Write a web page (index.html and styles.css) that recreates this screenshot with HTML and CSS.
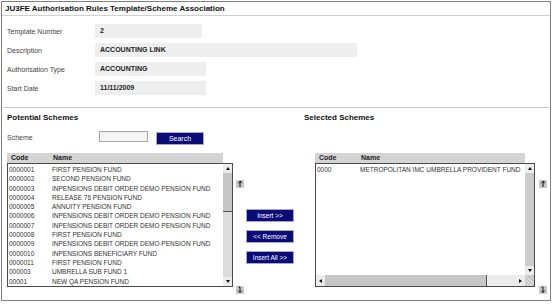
FILE: index.html
```html
<!DOCTYPE html>
<html lang="en">

<head>
    <meta charset="UTF-8">
    <title>Authorisation Rules Template/Scheme Association</title>
    <link rel="stylesheet" href="styles.css">
</head>

<body>
    <div class="frame">
        <div class="title">JU3FE Authorisation Rules Template/Scheme Association</div>

        <div class="details">
            <div class="field"><span class="label">Template Number</span><span class="value w-short">2</span></div>
            <div class="field"><span class="label">Description</span><span class="value w-long">ACCOUNTING LINK</span></div>
            <div class="field"><span class="label">Authorisation Type</span><span class="value w-mid">ACCOUNTING</span></div>
            <div class="field"><span class="label">Start Date</span><span class="value w-mid">11/11/2009</span></div>
        </div>

        <div class="divider"></div>

        <div class="heads">
            <div class="head head-left">Potential Schemes</div>
            <div class="head">Selected Schemes</div>
        </div>

        <div class="search-row">
            <span class="label search-label">Scheme</span>
            <input type="text" class="search-input">
            <button class="btn btn-search">Search</button>
        </div>

        <div class="lists">
            <div class="list-group list-left">
                <div class="list-head"><span class="col-code">Code</span><span>Name</span></div>
                <div class="listbox">
                    <div class="rows">
                        <div class="row"><span class="code">0000001</span><span>FIRST PENSION FUND</span></div>
                        <div class="row"><span class="code">0000002</span><span>SECOND PENSION FUND</span></div>
                        <div class="row"><span class="code">0000003</span><span>INPENSIONS DEBIT ORDER DEMO PENSION FUND</span></div>
                        <div class="row"><span class="code">0000004</span><span>RELEASE 76 PENSION FUND</span></div>
                        <div class="row"><span class="code">0000005</span><span>ANNUITY PENSION FUND</span></div>
                        <div class="row"><span class="code">0000006</span><span>INPENSIONS DEBIT ORDER DEMO PENSION FUND</span></div>
                        <div class="row"><span class="code">0000007</span><span>INPENSIONS DEBIT ORDER DEMO PENSION FUND</span></div>
                        <div class="row"><span class="code">0000008</span><span>FIRST PENSION FUND</span></div>
                        <div class="row"><span class="code">0000009</span><span>INPENSIONS DEBIT ORDER DEMO PENSION FUND</span></div>
                        <div class="row"><span class="code">0000010</span><span>INPENSIONS BENEFICIARY FUND</span></div>
                        <div class="row"><span class="code">0000011</span><span>FIRST PENSION FUND</span></div>
                        <div class="row"><span class="code">000003</span><span>UMBRELLA SUB FUND 1</span></div>
                        <div class="row"><span class="code">00001</span><span>NEW QA PENSION FUND</span></div>
                    </div>
                    <div class="vscroll">
                        <div class="arrow arrow-up"></div>
                        <div class="thumb"></div>
                        <div class="track"></div>
                        <div class="arrow arrow-down"></div>
                    </div>
                </div>
            </div>

            <div class="movers">
                <div class="mover">
                    <svg width="8" height="8" viewBox="0 0 8 8"><path d="M4 7V1.5M2.3 3.3L4 1.5L5.7 3.3M4 1.5H5.5" fill="none" stroke="#111" stroke-width="1"/></svg>
                </div>
                <div class="mover">
                    <svg width="8" height="8" viewBox="0 0 8 8"><path d="M4 1V6.5M2.3 4.7L4 6.5L5.7 4.7M2.5 1H4" fill="none" stroke="#111" stroke-width="1"/></svg>
                </div>
            </div>

            <div class="actions">
                <button class="btn">Insert &gt;&gt;</button>
                <button class="btn">&lt;&lt; Remove</button>
                <button class="btn">Insert All &gt;&gt;</button>
            </div>

            <div class="list-group list-right">
                <div class="list-head"><span class="col-code">Code</span><span>Name</span></div>
                <div class="listbox listbox-grid">
                    <div class="rows">
                        <div class="row"><span class="code">0000</span><span>METROPOLITAN IMC UMBRELLA PROVIDENT FUND</span></div>
                    </div>
                    <div class="vscroll">
                        <div class="arrow arrow-up"></div>
                        <div class="track track-off"></div>
                        <div class="arrow arrow-down"></div>
                    </div>
                    <div class="hscroll">
                        <div class="arrow arrow-left"></div>
                        <div class="hthumb"></div>
                        <div class="track"></div>
                        <div class="arrow arrow-right"></div>
                    </div>
                    <div class="corner"></div>
                </div>
            </div>

            <div class="movers movers-right">
                <div class="mover">
                    <svg width="8" height="8" viewBox="0 0 8 8"><path d="M4 7V1.5M2.3 3.3L4 1.5L5.7 3.3M4 1.5H5.5" fill="none" stroke="#111" stroke-width="1"/></svg>
                </div>
                <div class="mover">
                    <svg width="8" height="8" viewBox="0 0 8 8"><path d="M4 1V6.5M2.3 4.7L4 6.5L5.7 4.7M2.5 1H4" fill="none" stroke="#111" stroke-width="1"/></svg>
                </div>
            </div>
        </div>
    </div>
</body>

</html>
```

FILE: styles.css
```css
body {
    margin: 0;
    background-color: #ffffff;
    color: #222222;
    font-family: 'Liberation Sans', Arial, sans-serif;
}

.frame {
    margin: 1px 0 0 1px;
    width: 548px;
    height: 298px;
    border: 1px solid #808080;
}

.title {
    height: 13px;
    line-height: 13px;
    padding-left: 3px;
    font-size: 8px;
    font-weight: bold;
    color: #111111;
    border-bottom: 1px solid #d0d0d0;
}

/* template details */
.details {
    display: flex;
    flex-direction: column;
    gap: 5px;
    padding: 8px 0 0 5px;
}

.field {
    display: flex;
    align-items: center;
    height: 14px;
}

.label {
    width: 88px;
    font-size: 7px;
    color: #444444;
}

.value {
    height: 14px;
    line-height: 14px;
    padding-left: 5px;
    box-sizing: border-box;
    background-color: #eeeeee;
    font-size: 7px;
    font-weight: bold;
    color: #222222;
}

.w-short {
    width: 107px;
}

.w-mid {
    width: 111px;
}

.w-long {
    width: 262px;
}

.divider {
    margin: 12px 1px 0 2px;
    border-top: 1px solid #c4c4c4;
}

/* schemes */
.heads {
    display: flex;
    padding: 5px 0 0 5px;
}

.head {
    line-height: 10px;
    font-size: 8px;
    font-weight: bold;
    color: #111111;
}

.head-left {
    width: 297px;
}

.search-row {
    display: flex;
    align-items: flex-start;
    height: 14px;
    margin-top: 8px;
    padding-left: 5px;
}

.search-label {
    width: 92px;
    line-height: 14px;
}

.search-input {
    width: 49px;
    height: 11px;
    margin: 0;
    padding: 0;
    box-sizing: border-box;
    border: 1px solid #a8a8a8;
    background-color: #f4f4f4;
}

.btn {
    width: 48px;
    height: 13px;
    margin: 0;
    padding: 0;
    border: 1px solid #a8a8cc;
    background-color: #0b0b78;
    color: #ffffff;
    font-family: 'Liberation Sans', Arial, sans-serif;
    font-size: 6.5px;
    line-height: 11px;
}

.btn-search {
    margin: 1px 0 0 8px;
    font-size: 7px;
}

.lists {
    display: flex;
    align-items: flex-start;
    margin-top: 8px;
    padding-left: 5px;
}

.list-left {
    width: 226px;
}

.list-right {
    width: 220px;
    margin-left: 21px;
}

.list-head {
    display: flex;
    width: calc(100% - 10px);
    height: 10px;
    line-height: 10px;
    padding-left: 4px;
    box-sizing: border-box;
    background-color: #d4d4d4;
    font-size: 7px;
    font-weight: bold;
    color: #222222;
}

.col-code {
    width: 42px;
}

.listbox {
    display: flex;
    height: 124px;
    box-sizing: border-box;
    border: 1px solid #4a4a4a;
    background-color: #ffffff;
}

.listbox-grid {
    display: grid;
    grid-template-columns: 1fr 9px;
    grid-template-rows: 1fr 11px;
}

.rows {
    flex: 1;
    min-width: 0;
    padding-top: 1px;
    overflow: hidden;
    font-size: 6.5px;
    line-height: 9.3px;
    color: #333333;
}

.row {
    display: flex;
    white-space: nowrap;
}

.code {
    width: 43px;
    padding-left: 1px;
    flex-shrink: 0;
}

/* fake scrollbars */
.vscroll {
    display: flex;
    flex-direction: column;
    width: 9px;
    background-color: #dedede;
}

.hscroll {
    display: flex;
    height: 11px;
    background-color: #e6e6e6;
}

.arrow {
    display: flex;
    align-items: center;
    justify-content: center;
    width: 9px;
    height: 9px;
    flex-shrink: 0;
    background-color: #ececec;
}

.hscroll .arrow {
    height: 11px;
}

.arrow::before {
    content: "";
    border: 2px solid transparent;
}

.arrow-up::before {
    border-bottom: 3px solid #111111;
    border-top-width: 0;
}

.arrow-down::before {
    border-top: 3px solid #111111;
    border-bottom-width: 0;
}

.arrow-left::before {
    border-right: 3px solid #111111;
    border-left-width: 0;
}

.arrow-right::before {
    border-left: 3px solid #111111;
    border-right-width: 0;
}

.thumb {
    height: 38px;
    background-color: #c6c6c6;
    border-bottom: 1px solid #505050;
}

.track {
    flex: 1;
    background-color: #dcdcdc;
}

.track-off {
    background-color: #cccccc;
}

.hthumb {
    width: 161px;
    background-color: #c6c6c6;
    border-right: 1px solid #505050;
}

.hscroll .track {
    background-color: #ececec;
}

.corner {
    background-color: #d8d8d8;
    background-image: repeating-linear-gradient(45deg, #bdbdbd 0 1px, transparent 1px 3px);
}

.movers {
    display: flex;
    flex-direction: column;
    justify-content: space-between;
    width: 8px;
    height: 141px;
    margin-left: 3px;
    padding-top: 27px;
    box-sizing: border-box;
}

.movers-right {
    margin-left: 4px;
}

.mover {
    display: flex;
    width: 8px;
    height: 8px;
    background-color: #c8c8c8;
}

.actions {
    display: flex;
    flex-direction: column;
    gap: 8px;
    margin-left: 2px;
    padding-top: 56px;
}
```
